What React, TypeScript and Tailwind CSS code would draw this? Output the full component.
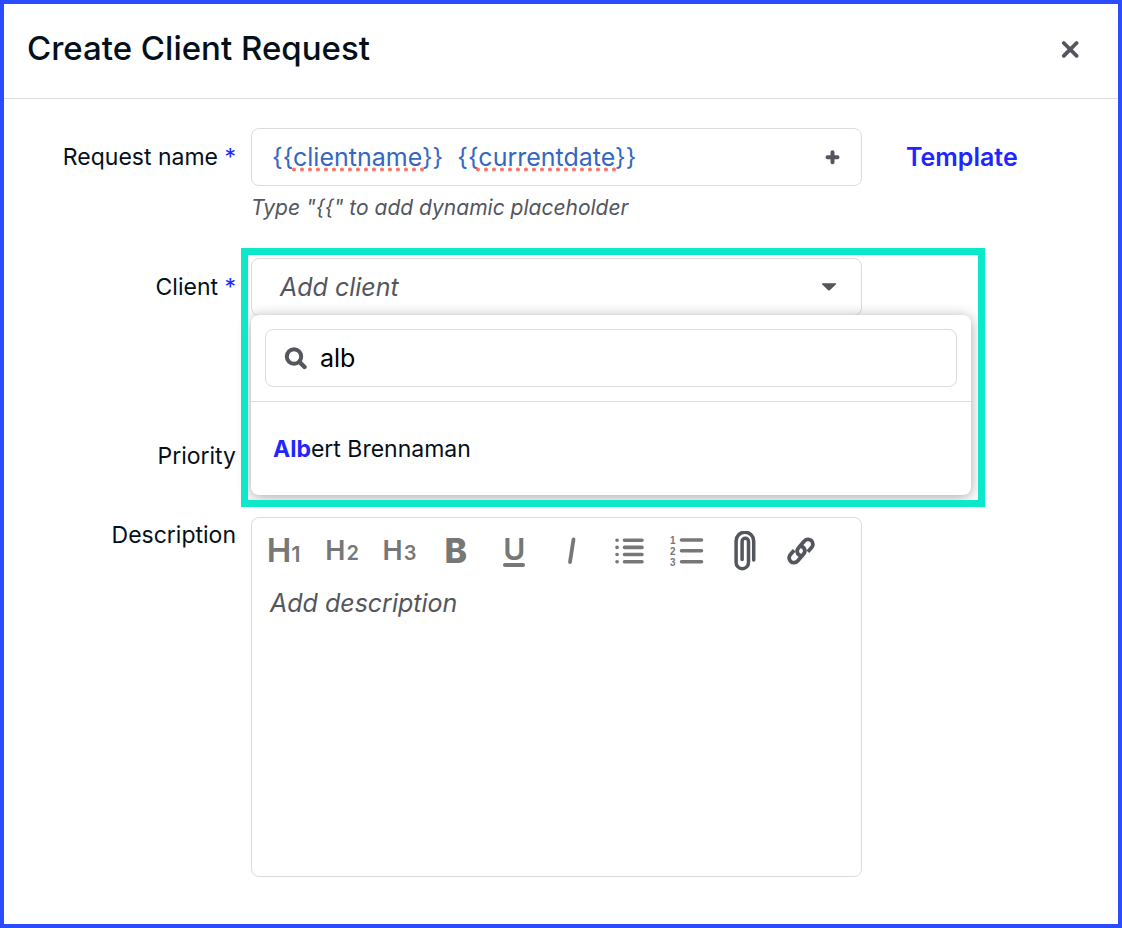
import React, { useState } from "react";

const CloseIcon = () => (
  <svg width="18" height="18" viewBox="0 0 18 18" fill="none" stroke="currentColor" strokeWidth="3.800" strokeLinecap="round">
    <path d="M2.800 3l12.800 12.800M15.600 3l-12.800 12.800" />
  </svg>
);

const PlusIcon = () => (
  <svg width="16" height="16" viewBox="0 0 16 16" fill="none" stroke="currentColor" strokeWidth="4" strokeLinecap="round">
    <path d="M7.500 3.300v10M2.500 8.300h10" />
  </svg>
);

const CaretIcon = () => (
  <svg width="16" height="8" viewBox="0 0 16 8" fill="currentColor">
    <path d="M1.400.2h13.200c.6 0 .8.600.4 1L8.800 7.200c-.5.5-1.100.5-1.600 0L1 1.200c-.4-.4-.2-1 .4-1z" />
  </svg>
);

const SearchIcon = () => (
  <svg width="24" height="24" viewBox="0 0 24 24" fill="none" stroke="currentColor" strokeLinecap="round">
    <circle cx="10" cy="10.500" r="7.200" strokeWidth="4" />
    <path d="M16 16.500l4.500 4.500" strokeWidth="4.400" />
  </svg>
);

const BulletListIcon = () => (
  <svg width="30" height="28" viewBox="0 0 30 28" fill="none" stroke="currentColor" strokeLinecap="round" strokeWidth="3.600">
    <path d="M10.500 3.300h17.500M10.500 10.400h17.500M10.500 17.500h17.500M10.500 24.700h17.500" />
    <path d="M3 3.300h.1M3 10.400h.1M3 17.500h.1M3 24.700h.1" />
  </svg>
);

const NumberListIcon = () => (
  <svg width="34" height="34" viewBox="0 0 34 34" fill="none">
    <path d="M11.500 6h20M11.500 16.800h20M11.500 27.700h20" stroke="currentColor" strokeLinecap="round" strokeWidth="3.600" />
    <g fill="currentColor" fontFamily="Liberation Sans, sans-serif" fontSize="10" fontWeight="700">
      <text x="0" y="10">1</text>
      <text x="0" y="21">2</text>
      <text x="0" y="32">3</text>
    </g>
  </svg>
);

const ClipIcon = () => (
  <svg width="24" height="40" viewBox="0 0 24 40" fill="none" stroke="currentColor" strokeWidth="3.500" strokeLinecap="round">
    <path d="M21.700 29V10a8.800 8.800 0 0 0-17.600 0v21.500a6.200 6.200 0 0 0 12.400 0V10.500a3.200 3.200 0 0 0-6.400 0V28.500" />
  </svg>
);

const LinkIcon = () => (
  <svg width="30" height="30" viewBox="0 0 30 30" fill="none" stroke="currentColor" strokeWidth="3.800">
    <path d="M15.200 19.800c-4.200-1-5.200-5.200-2.600-8L18.400 5c2-2.200 5-2.200 7-.3s2 5 0 7l-3.600 4" />
    <path d="M14.800 10.200c4.200 1 5.200 5.200 2.600 8L11.600 25c-2 2.200-5 2.200-7 .3s-2-5 0-7l3.600-4" />
  </svg>
);

const Label: React.FC<{ htmlFor: string; required?: boolean; children: React.ReactNode }> = ({
  htmlFor,
  required,
  children,
}) => (
  <label htmlFor={htmlFor} className="pr-[15px] text-right text-[23px] text-[#04101a]">
    {children}
    {required ? <span className="text-[#1f26ff]"> *</span> : null}
  </label>
);

const ToolButton: React.FC<{ label: string; children: React.ReactNode }> = ({ label, children }) => (
  <button type="button" aria-label={label} className="flex h-12 flex-1 items-center justify-center">
    {children}
  </button>
);

const Heading: React.FC<{ level: string }> = ({ level }) => (
  <span className="flex items-baseline gap-px pt-0.5 text-[27px] leading-8 font-semibold">
    H<span className="text-xl leading-8">{level}</span>
  </span>
);

const Toolbar = () => (
  <div className="flex h-16 max-w-[578px] items-center pt-0.5 pl-1 text-[#777]">
    <ToolButton label="Heading 1">
      <span className="flex items-baseline pt-0.5 pr-0.5 text-[33px] leading-8 font-semibold">
        H<span className="text-[22px] leading-8">1</span>
      </span>
    </ToolButton>
    <ToolButton label="Heading 2">
      <Heading level="2" />
    </ToolButton>
    <ToolButton label="Heading 3">
      <Heading level="3" />
    </ToolButton>
    <ToolButton label="Bold">
      <span className="pr-0.5 text-[34px] leading-8 font-extrabold">B</span>
    </ToolButton>
    <ToolButton label="Underline">
      <span className="flex flex-col items-center">
        <span className="text-[30px] leading-7 font-semibold">U</span>
        <span className="h-1 w-[22px] rounded-full bg-current" />
      </span>
    </ToolButton>
    <ToolButton label="Italic">
      <svg width="10" height="28" viewBox="0 0 10 28" stroke="currentColor" strokeWidth="3.800" strokeLinecap="round">
        <path d="M6.500 2.500L3 25" />
      </svg>
    </ToolButton>
    <ToolButton label="Bulleted list">
      <BulletListIcon />
    </ToolButton>
    <ToolButton label="Numbered list">
      <NumberListIcon />
    </ToolButton>
    <span className="flex flex-[2] text-[#53565d]">
      <ToolButton label="Attach file">
        <ClipIcon />
      </ToolButton>
      <ToolButton label="Insert link">
        <LinkIcon />
      </ToolButton>
    </span>
  </div>
);

const ClientMenu = () => {
  const [query, setQuery] = useState("alb");

  return (
    <div className="absolute top-full left-0 z-10 -mt-px -right-[109px] rounded-lg bg-white shadow-[0_2px_14px_rgba(0,0,0,0.35)]">
      <div className="border-b border-[#dcdcdc] p-[14px]">
        <label className="flex h-[58px] items-center gap-3 rounded-lg border border-[#dcdcdc] px-[18px] text-[#53565d]">
          <SearchIcon />
          <input
            type="text"
            aria-label="Search clients"
            value={query}
            onChange={(e) => setQuery(e.target.value)}
            className="min-w-0 flex-1 pt-0.5 text-[25px] text-black outline-none"
          />
        </label>
      </div>
      <ul className="py-[18px]">
        <li>
          <button type="button" className="h-[57px] w-full px-[22px] pt-0.5 text-left text-[23px] text-[#04101a]">
            <span className="font-bold text-[#1f26ff]">Alb</span>ert Brennaman
          </button>
        </li>
      </ul>
    </div>
  );
};

const App: React.FC = () => {
  const [name, setName] = useState("{{clientname}}  {{currentdate}}");

  return (
    <main className="min-h-screen border-4 border-[#2b4dff] bg-white font-['Inter',sans-serif]">
      <header className="flex items-start justify-between border-b border-[#dcdcdc] px-[23px] pt-6 pb-[30px]">
        <h1 className="text-[33px] leading-10 font-medium text-[#04101a]">Create Client Request</h1>
        <button type="button" aria-label="Close" className="mt-3 mr-4 text-[#53565d]">
          <CloseIcon />
        </button>
      </header>

      <form className="grid grid-cols-[247px_1fr_256px] pt-[29px]">
        <Label htmlFor="request-name" required>
          <span className="leading-[58px]">Request name</span>
        </Label>
        <div className="h-[130px]">
          <div className="relative flex h-[58px] items-center rounded-lg border border-[#dcdcdc] pr-5 pl-5">
            <input
              id="request-name"
              type="text"
              value={name}
              spellCheck={false}
              onChange={(e) => setName(e.target.value)}
              className="min-w-0 flex-1 pt-0.5 text-[25px] whitespace-pre text-[#3468c0] outline-none"
            />
            {/* spelling marks */}
            <svg
              className="pointer-events-none absolute top-[38px] left-[39px]"
              width="350"
              height="5"
              stroke="#ff6f66"
              strokeWidth="4"
              strokeLinecap="round"
              strokeDasharray="0 8"
            >
              <path d="M3 2.500h129M187 2.500h137" />
            </svg>
            <button type="button" aria-label="Add placeholder" className="text-[#53565d]">
              <PlusIcon />
            </button>
          </div>
          <p className="pt-2 text-[21px] leading-7 text-[#53565d] italic">Type "&#123;&#123;" to add dynamic placeholder</p>
        </div>
        <div className="flex h-[58px] items-center pt-0.5 pl-11">
          <a href="#template" className="text-[25px] font-semibold text-[#1f26ff]">
            Template
          </a>
        </div>

        <Label htmlFor="client" required>
          <span className="leading-[58px]">Client</span>
        </Label>
        <div className="relative mb-[112px]">
          <button
            id="client"
            type="button"
            aria-haspopup="listbox"
            aria-expanded="true"
            className="flex h-[58px] w-full items-center justify-between rounded-lg border border-[#dcdcdc] pr-6 pl-7 text-[25px] text-[#53565d] italic"
          >
            <span className="pt-0.5">Add client</span>
            <CaretIcon />
          </button>
          <ClientMenu />
          <div className="pointer-events-none absolute -top-[10px] -right-[123px] -bottom-[191px] -left-[10px] z-20 border-[7px] border-[#0ce8ca]" />
        </div>
        <div />

        <Label htmlFor="priority">
          <span className="leading-[56px]">Priority</span>
        </Label>
        <div className="mb-[33px]">
          <select id="priority" className="h-14 w-full rounded-lg border border-[#dcdcdc] px-7 text-[25px]" />
        </div>
        <div />

        <Label htmlFor="description">
          <span className="leading-9">Description</span>
        </Label>
        <div className="rounded-lg border border-[#dcdcdc]">
          <Toolbar />
          <textarea
            id="description"
            placeholder="Add description"
            className="block h-[294px] w-full resize-none px-[18px] py-[3px] text-[25px] leading-9 outline-none placeholder:text-[#53565d] placeholder:italic"
          />
        </div>
        <div />
      </form>
    </main>
  );
};

export default App;
